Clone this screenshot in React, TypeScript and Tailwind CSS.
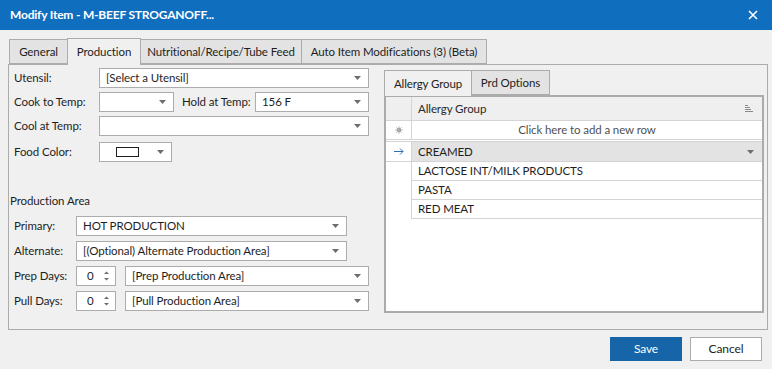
import React from 'react';

const Caret = () => (
  <svg width="7" height="4" viewBox="0 0 7 4" className="shrink-0">
    <path d="M0 0h7L3.5 4z" fill="#6d6d6d" />
  </svg>
);

function Combo({ text, className = '' }: { text?: string; className?: string }) {
  return (
    <div className={`h-[20px] bg-white border border-[#acacac] flex items-center justify-between pl-[6px] pr-[7px] ${className}`}>
      <span className="text-[#1e1e1e] truncate">{text}</span>
      <Caret />
    </div>
  );
}

function Spin() {
  return (
    <div className="h-[20px] w-[40px] bg-white border border-[#acacac] flex items-center justify-between pl-[10px] pr-[5px]">
      <span className="text-[#1e1e1e]">0</span>
      <svg width="7" height="14" viewBox="0 0 7 14">
        <path d="M1 5L3.5 2.5L6 5z" fill="#6d6d6d" />
        <path d="M1 9L3.5 11.5L6 9z" fill="#6d6d6d" />
      </svg>
    </div>
  );
}

export default function App() {
  const tabs: [string, string][] = [
    ['General', 'w-[59px]'],
    ['Production', 'w-[74px]'],
    ['Nutritional/Recipe/Tube Feed', 'w-[162px]'],
    ['Auto Item Modifications (3) (Beta)', 'w-[186px]'],
  ];
  const rows = ['LACTOSE INT/MILK PRODUCTS', 'PASTA', 'RED MEAT'];

  return (
    <div className="w-[772px] h-[369px] bg-[#f0f0f0] flex flex-col text-[11.5px] tracking-[-0.1px] text-[#1e1e1e] overflow-hidden whitespace-nowrap" style={{ fontFamily: 'Lato, "Liberation Sans", sans-serif' }}>
      {/* title bar */}
      <div className="h-[30px] bg-[#106ebe] flex items-center justify-between pl-[10px] pr-[14px] shrink-0">
        <span className="text-white font-bold text-[12px] tracking-[-0.2px]">Modify Item - M-BEEF STROGANOFF...</span>
        <svg width="10" height="10" viewBox="0 0 10 10">
          <path d="M1 1L9 9M9 1L1 9" stroke="white" strokeWidth="1.6" />
        </svg>
      </div>

      {/* tabs */}
      <div className="flex items-end pl-[9px] mt-[8px] h-[26px]">
        {tabs.map(([t, w], i) =>
          i === 1 ? (
            <div key={t} className={`${w} h-[27px] -mb-px -ml-px flex items-center justify-center bg-[#f0f0f0] border border-b-0 border-[#acacac] relative z-10`}>
              {t}
            </div>
          ) : (
            <div key={t} className={`${w} h-[25px] flex items-center justify-center bg-[#e3e3e3] border border-[#acacac] ${i > 1 ? '-ml-px' : ''}`}>
              {t}
            </div>
          )
        )}
      </div>

      {/* content panel */}
      <div className="mx-[8px] w-[760px] h-[266px] border border-[#acacac] flex">
        {/* left side */}
        <div className="w-[375px] flex flex-col pl-[5px] pt-[3px]">
          <div className="flex items-center h-[20px]">
            <span className="w-[85px]">Utensil:</span>
            <Combo text="[Select a Utensil]" className="w-[270px]" />
          </div>
          <div className="flex items-center h-[20px] mt-[4px]">
            <span className="w-[85px]">Cook to Temp:</span>
            <Combo className="w-[75px]" />
            <span className="ml-[8px] w-[73px]">Hold at Temp:</span>
            <Combo text="156 F" className="w-[114px] pl-[3px]" />
          </div>
          <div className="flex items-center h-[20px] mt-[4px]">
            <span className="w-[85px]">Cool at Temp:</span>
            <Combo className="w-[270px]" />
          </div>
          <div className="flex items-center h-[20px] mt-[6px]">
            <span className="w-[85px]">Food Color:</span>
            <div className="h-[20px] w-[73px] bg-white border border-[#acacac] flex items-center justify-between pl-[16px] pr-[7px]">
              <div className="w-[23px] h-[10px] border border-[#1e1e1e]" />
              <Caret />
            </div>
          </div>

          <div className="-ml-[4px] mt-[31px] leading-[16px]">Production Area</div>

          <div className="flex items-center h-[20px] mt-[7px]">
            <span className="w-[62px]">Primary:</span>
            <Combo text="HOT PRODUCTION" className="w-[271px]" />
          </div>
          <div className="flex items-center h-[20px] mt-[5px]">
            <span className="w-[62px]">Alternate:</span>
            <Combo text="[(Optional) Alternate Production Area]" className="w-[271px]" />
          </div>
          <div className="flex items-center h-[20px] mt-[5px]">
            <span className="w-[62px]">Prep Days:</span>
            <Spin />
            <Combo text="[Prep Production Area]" className="w-[244px] ml-[9px]" />
          </div>
          <div className="flex items-center h-[20px] mt-[5px]">
            <span className="w-[62px]">Pull Days:</span>
            <Spin />
            <Combo text="[Pull Production Area]" className="w-[244px] ml-[9px]" />
          </div>
        </div>

        {/* right side */}
        <div className="mt-[4px] w-[380px] h-[244px] flex flex-col">
          <div className="flex items-end h-[26px]">
            <div className="h-[26px] w-[88px] -mb-px flex items-center justify-center bg-[#f0f0f0] border border-b-0 border-[#acacac] relative z-10">
              Allergy Group
            </div>
            <div className="h-[25px] w-[78px] flex items-center justify-center bg-[#e3e3e3] border border-l-0 border-[#acacac]">
              Prd Options
            </div>
          </div>
          <div className="flex-1 border-2 border-[#ababab] bg-white flex flex-col">
            <div className="h-[24px] flex bg-[#efefef] border-b border-[#d4d4d4]">
              <div className="w-[26px] border-r border-[#d4d4d4]" />
              <div className="flex-1 flex items-center justify-between pl-[6px] pr-[9px]">
                <span className="text-[#2a2a2a]">Allergy Group</span>
                <svg width="8" height="7" viewBox="0 0 8 7">
                  <path d="M0 0.5h3M0 2.5h5M0 4.5h6M0 6.5h8" stroke="#8a8a8a" strokeWidth="1" />
                </svg>
              </div>
            </div>
            <div className="h-[19px] flex border-b border-[#d4d4d4]">
              <div className="w-[26px] border-r border-[#d4d4d4] flex items-center justify-center">
                <svg width="8" height="8" viewBox="0 0 8 8">
                  <circle cx="4" cy="4" r="2.3" fill="#9a9a9a" />
                  <path d="M4 0v8M0 4h8M1.2 1.2l5.6 5.6M6.8 1.2l-5.6 5.6" stroke="#b0b0b0" strokeWidth="0.8" />
                </svg>
              </div>
              <div className="flex-1 flex items-center justify-center text-[#505050]">Click here to add a new row</div>
            </div>
            <div className="h-[2px] bg-white border-b border-[#d4d4d4]" />
            <div className="h-[20px] flex border-b border-[#d4d4d4] bg-white">
              <div className="w-[26px] border-r border-[#d4d4d4] flex items-center justify-center">
                <svg width="10" height="7" viewBox="0 0 10 7">
                  <path d="M0 3.5h9M6 0.5l3 3-3 3" stroke="#2f6fb5" strokeWidth="1" fill="none" />
                </svg>
              </div>
              <div className="flex-1 flex items-center justify-between pl-[6px] pr-[8px] bg-[#e3e3e3]">
                <span>CREAMED</span>
                <Caret />
              </div>
            </div>
            {rows.map((r) => (
              <div key={r} className="h-[19px] flex">
                <div className="w-[26px] border-r border-[#d4d4d4]" />
                <div className="flex-1 flex items-center pl-[6px] border-b border-[#d4d4d4]">{r}</div>
              </div>
            ))}
          </div>
        </div>
      </div>

      {/* buttons */}
      <div className="flex justify-end gap-[8px] pr-[10px] mt-[7px]">
        <button className="w-[72px] h-[24px] bg-[#1565a8] text-white text-[12px]">Save</button>
        <button className="w-[72px] h-[24px] bg-white border border-[#acacac] text-[12px] text-[#1e1e1e]">Cancel</button>
      </div>
    </div>
  );
}
